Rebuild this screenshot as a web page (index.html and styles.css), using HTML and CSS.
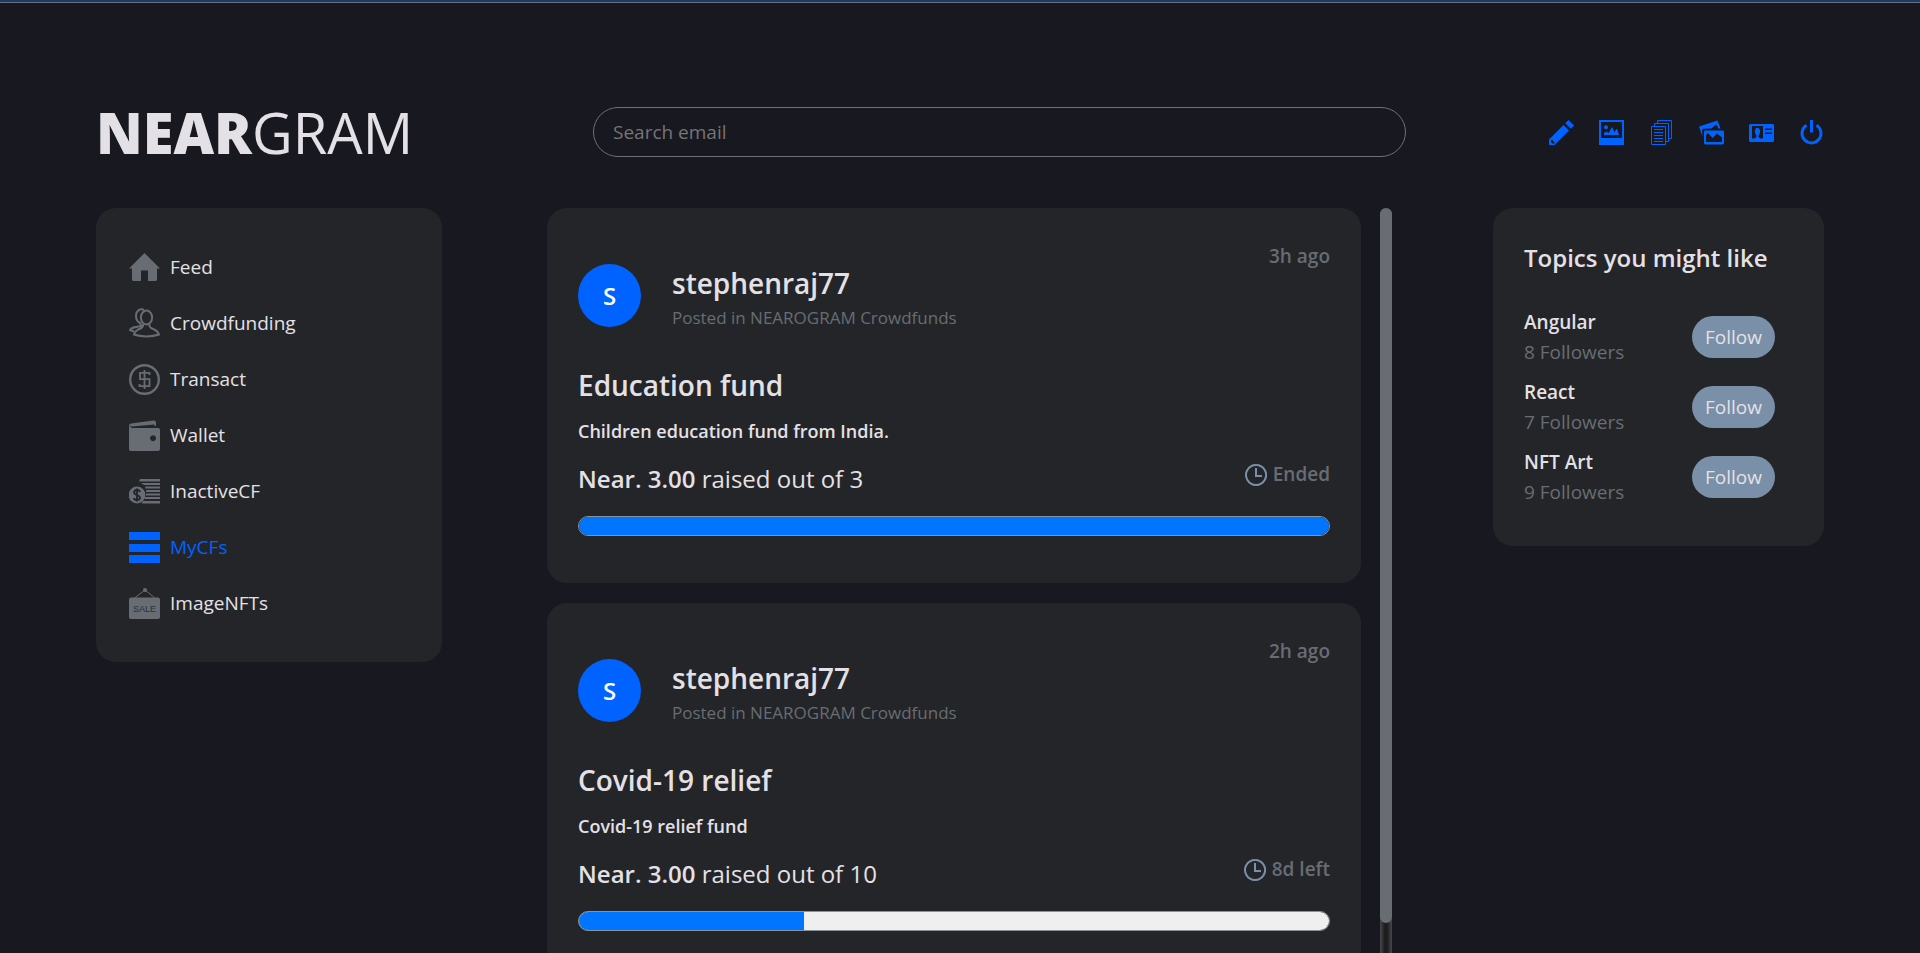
FILE: index.html
```html
<!DOCTYPE html>
<html lang="en">
<head>
    <meta charset="UTF-8">
    <meta name="viewport" content="width=device-width, initial-scale=1.0">
    <title>Neargram</title>
    <link rel="stylesheet" href="styles.css">
</head>
<body>
    <!-- header -->
    <header class="header">
        <h1 class="logo"><b>NEAR</b>GRAM</h1>
        <form class="search">
            <input type="search" placeholder="Search email" aria-label="Search email">
        </form>
        <nav class="tools">
            <a href="#" aria-label="Write">
                <svg viewBox="0 0 25 25"><path fill-rule="evenodd" d="M19.500 0 25 5.500 21.800 8.700 16.300 3.200zM14.500 5 20 10.500 5.500 25H0v-5.500zM2 20v2l1.500 1.500H5.500V21.800H4V20z"/></svg>
            </a>
            <a href="#" aria-label="Image">
                <svg viewBox="0 0 25 25"><path fill-rule="evenodd" d="M0 0h25v25H0zM2 2v16h21V2z"/><circle cx="7" cy="7.200" r="2"/><path d="M5 15v-2l2.500-1.500 2 1.500 3.500-6 2.500 5 2.500-3.500 2 6.500z"/></svg>
            </a>
            <a href="#" aria-label="Documents">
                <svg viewBox="0 0 25 25"><path fill="none" stroke="currentColor" stroke-width="1" d="M2.500 6.500h14v18h-14zM5.500 6V3.500h14v18H17M8.500 3V.5h14v18H20M5 9.500h9M5 12.500h9M5 15.500h9M5 18.500h9M5 21.500h9"/></svg>
            </a>
            <a href="#" aria-label="Photos">
                <svg viewBox="0 0 25 25"><path d="M0 6.500 18.500.5 21.500 8.500h-2L17.300 4.500 14.500 6.500 12.500 8.500 4 8.800 3.200 10v6z"/><path fill-rule="evenodd" d="M6 10.500h18l1 1v12l-1 1H6l-1-1v-12zM7 22V15l2-2 4.500 5 4.500-4.500 5 4V22z"/></svg>
            </a>
            <a href="#" aria-label="Profile">
                <svg viewBox="0 0 25 25"><path fill-rule="evenodd" d="M1 4h23l1 1v16l-1 1H1l-1-1V5zM3 6v12.500h2.500l1.800-1.500V15.500L6 13v-3l1-2h2.500l1.500 2v3l-1.500 2.500V17l1.800 1.500H14V6zM16 8.500v1.500h7V8.500zM16 12.500V14h7v-1.500z"/></svg>
            </a>
            <a href="#" aria-label="Log out">
                <svg viewBox="0 0 25 25"><path fill="none" stroke="currentColor" stroke-width="3" d="M7.500 5.300a9.500 9.500 0 1 0 10 0M12.500 0v12.500"/></svg>
            </a>
        </nav>
    </header>

    <main class="content">
        <!-- left menu -->
        <nav class="card menu">
            <a href="#">
                <svg viewBox="0 0 31 31"><path d="M15.500 1 31 16.500H28V28l-1 1h-8V18.500h-7V29H4l-1-1V16.500H0z"/></svg>
                Feed
            </a>
            <a href="#">
                <svg viewBox="0 0 31 31"><g fill="none" stroke="currentColor" stroke-width="2"><ellipse cx="17.500" cy="9.500" rx="5.600" ry="7"/><path d="M15 2C11 0 7 3 7 7.500c0 4 2 7 5 8M11.500 15.500 12 18C6 19 2 19.500 1 22l4 1.500M14 16c.5 2 0 3-1.500 4-4 1.500-7 3.500-7.500 6.500 7 2.500 18 2.500 25 0-1-3-4-5-8-6.500-1.500-1-2-2-1.500-4"/></g></svg>
                Crowdfunding
            </a>
            <a href="#">
                <svg viewBox="0 0 31 31"><g fill="none" stroke="currentColor"><circle cx="15.500" cy="15.500" r="14.300" stroke-width="2.400"/><path stroke-width="1.800" d="M20.500 11V8.800H11v6.400h9.500v7H10.500V20M15.500 6v19"/></g></svg>
                Transact
            </a>
            <a href="#">
                <svg viewBox="0 0 31 31"><path d="M0 5.500Q0 4 2 3.500L24.500.5Q27 .3 27 2.500V6h-1.500V4.500L3 6.500z"/><path fill-rule="evenodd" d="M0 5.500 3 8h26q2 0 2 2v19q0 2-2 2H2q-2 0-2-2zM24 15.300a3 3 0 1 0 .1 0z"/></svg>
                Wallet
            </a>
            <a href="#">
                <svg viewBox="0 0 31 31"><path d="M11 3h20v2.500H10zM12 7h19v2H15zM16 10.500h15v2H16.500zM17 14h14v2H17.300zM17 17.500h14v2H17zM16 21h15v2H15.500zM14 25h17v2.500H12.500z"/><circle cx="8" cy="19" r="8.400"/><path fill="none" stroke="#222428" stroke-width="1.800" d="M11 16q-.5-2-3-2t-3 2.300Q5 18 8 19t3 2.800Q11 24 8 24t-3-2M8 12.500v13"/></svg>
                InactiveCF
            </a>
            <a href="#" class="on">
                <svg viewBox="0 0 31 31"><path d="M0 0h31v8H0zM0 12h31v8H0zM0 23h31v8H0z"/></svg>
                MyCFs
            </a>
            <a href="#">
                <svg viewBox="0 0 31 31"><circle cx="16" cy="2" r="2"/><path fill="none" stroke="currentColor" d="M5 10.500 16 2l10.500 8.500"/><rect y="9.500" width="31" height="21.500" rx="2"/><text class="sale" x="15.500" y="24" text-anchor="middle">SALE</text></svg>
                ImageNFTs
            </a>
        </nav>

        <!-- crowdfund list -->
        <div class="feed">
            <div class="posts">
                <article class="card post">
                    <div class="post-head">
                        <div class="author">
                            <span class="avatar">S</span>
                            <div>
                                <h2>stephenraj77</h2>
                                <p>Posted in NEAROGRAM Crowdfunds</p>
                            </div>
                        </div>
                        <span class="time">3h ago</span>
                    </div>
                    <h2 class="post-title">Education fund</h2>
                    <p class="desc">Children education fund from India.</p>
                    <div class="raised">
                        <p><b>Near. 3.00</b> raised out of 3</p>
                        <span class="time">
                            <svg viewBox="0 0 22 22"><path d="M11 1a10 10 0 1 0 .1 0M11 4v8h6"/></svg>
                            Ended
                        </span>
                    </div>
                    <progress max="3" value="3" aria-label="Education fund"></progress>
                </article>
                <article class="card post">
                    <div class="post-head">
                        <div class="author">
                            <span class="avatar">S</span>
                            <div>
                                <h2>stephenraj77</h2>
                                <p>Posted in NEAROGRAM Crowdfunds</p>
                            </div>
                        </div>
                        <span class="time">2h ago</span>
                    </div>
                    <h2 class="post-title">Covid-19 relief</h2>
                    <p class="desc">Covid-19 relief fund</p>
                    <div class="raised">
                        <p><b>Near. 3.00</b> raised out of 10</p>
                        <span class="time">
                            <svg viewBox="0 0 22 22"><path d="M11 1a10 10 0 1 0 .1 0M11 4v8h6"/></svg>
                            8d left
                        </span>
                    </div>
                    <progress max="10" value="3" aria-label="Covid-19 relief"></progress>
                </article>
            </div>
            <div class="scrollbar"><div class="thumb"></div></div>
        </div>

        <!-- topics -->
        <aside class="card topics">
            <h3>Topics you might like</h3>
            <ul>
                <li>
                    <div><b>Angular</b><p>8 Followers</p></div>
                    <button type="button">Follow</button>
                </li>
                <li>
                    <div><b>React</b><p>7 Followers</p></div>
                    <button type="button">Follow</button>
                </li>
                <li>
                    <div><b>NFT Art</b><p>9 Followers</p></div>
                    <button type="button">Follow</button>
                </li>
            </ul>
        </aside>
    </main>
</body>
</html>
```

FILE: styles.css
```css
*{
    margin: 0;
    padding: 0;
    box-sizing: border-box;
    list-style: none;
}
body{
    height: 100vh;
    overflow: hidden;
    display: flex;
    flex-direction: column;
    background-color: #181820;
    border-top: 2px solid #1d3a66;
    color: #e4e1e6;
    font-family: "Segoe UI", "Open Sans", "Noto Sans", sans-serif;
    font-size: 19px;
}
body::before{
    content: "";
    height: 1px;
    flex-shrink: 0;
    background-color: #6b7078;
}
a{
    color: inherit;
    text-decoration: none;
}
svg{
    fill: currentColor;
    flex-shrink: 0;
}
b, h2, h3{
    font-weight: 600;
}

/* header */
.header{
    display: grid;
    grid-template-columns: 497fr 813fr 418fr;
    align-items: center;
    padding: 104px 5% 51px;
}
.logo{
    font-size: 56px;
    line-height: 50px;
    font-weight: 400;
}
.logo b{
    font-weight: 800;
}
.search input{
    display: block;
    width: 100%;
    height: 50px;
    padding: 0 19px;
    border: 1px solid #6b7078;
    border-radius: 25px;
    background: transparent;
    color: #e4e1e6;
    font: inherit;
    appearance: none;
}
.search input::placeholder{
    color: #757575;
}
.tools{
    display: flex;
    justify-content: flex-end;
    gap: 25px;
    color: #0062ff;
}
.tools svg{
    display: block;
    width: 25px;
    height: 25px;
}

.content{
    flex: 1;
    min-height: 0;
    display: grid;
    grid-template-columns: 346fr 105fr 845fr 101fr 331fr;
    align-items: start;
    padding: 0 5%;
}
.card{
    background-color: #242529;
    border-radius: 20px;
}

/* left menu */
.menu{
    display: flex;
    flex-direction: column;
    gap: 25px;
    padding: 44px 33px 43px;
}
.menu a{
    display: flex;
    align-items: center;
    gap: 10px;
    line-height: 31px;
}
.menu svg{
    width: 31px;
    height: 31px;
    color: #676d73;
}
.menu .on, .menu .on svg{
    color: #0062ff;
}
.sale{
    fill: #2e3035;
    font: 9px "Liberation Sans", sans-serif;
}

/* crowdfund list */
.feed{
    grid-column: 3;
    height: 100%;
    min-height: 0;
    display: flex;
    gap: 19px;
}
.posts{
    flex: 1;
    overflow-y: auto;
    scrollbar-width: none;
}
.scrollbar{
    width: 12px;
    background: linear-gradient(90deg, #47484c, #1d1d20 40%, #1d1d20 60%, #47484c);
    border-radius: 6px 6px 0 0;
}
.thumb{
    height: 96%;
    border-radius: 6px;
    background-color: #676d73;
}
.post{
    padding: 36px 31px 47px;
    margin-bottom: 20px;
}
.post-head, .raised{
    display: flex;
    justify-content: space-between;
    align-items: flex-start;
}
.author{
    display: flex;
    gap: 31px;
    margin-top: 20px;
}
.author h2, .post-title{
    font-size: 28px;
    line-height: 38px;
}
.author p{
    color: #676d73;
    font-size: 17px;
    line-height: 32px;
}
.avatar{
    width: 63px;
    height: 63px;
    border-radius: 50%;
    background-color: #0062ff;
    color: #fff;
    font-size: 24px;
    font-weight: 600;
    line-height: 63px;
    text-align: center;
}
.time{
    display: flex;
    align-items: center;
    gap: 6px;
    color: #676d73;
    font-weight: 600;
    line-height: 25px;
}
.time svg{
    width: 22px;
    height: 22px;
    fill: none;
    stroke: #7a8fa8;
    stroke-width: 2;
}
.post-title{
    margin-top: 32px;
}
.desc{
    margin: 13px 0 17px;
    font-size: 18px;
    font-weight: 600;
    line-height: 28px;
}
.raised p{
    font-size: 24px;
    line-height: 34px;
}
progress{
    display: block;
    width: 100%;
    height: 20px;
    margin-top: 20px;
    border: 1px solid #8a929c;
    border-radius: 10px;
    overflow: hidden;
    appearance: none;
}
progress::-webkit-progress-bar{
    background-color: #efefef;
}
progress::-webkit-progress-value{
    background-color: #0075ff;
}

/* topics */
.topics{
    grid-column: 5;
    padding: 34px 49px 39px 31px;
}
.topics h3{
    margin-bottom: 33px;
    font-size: 24px;
    line-height: 32px;
    white-space: nowrap;
}
.topics li{
    display: flex;
    justify-content: space-between;
    align-items: center;
    line-height: 30px;
}
.topics li + li{
    margin-top: 10px;
}
.topics p{
    color: #676d73;
}
.topics button{
    height: 42px;
    padding: 0 13px;
    border: none;
    border-radius: 21px;
    background-color: #7a8fa8;
    color: #e4e1e6;
    font: inherit;
}
```
